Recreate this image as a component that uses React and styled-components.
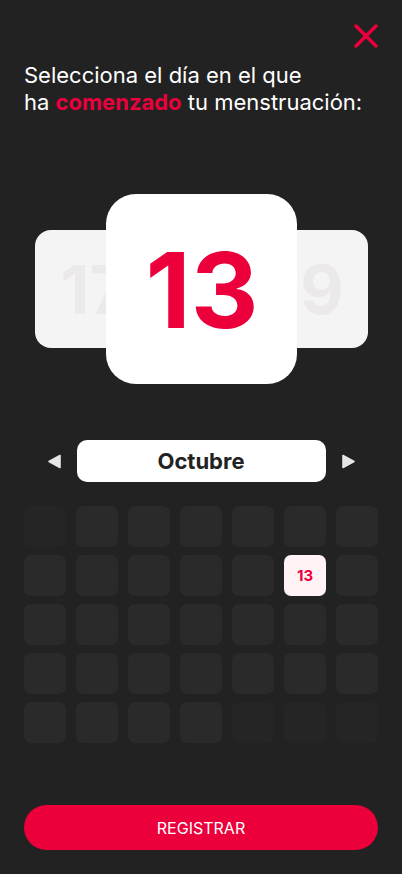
import React from "react";
import styled, { createGlobalStyle } from "styled-components";

const Global = createGlobalStyle`
  html, body { margin: 0; padding: 0; background: #222222; }
  body { font-family: Inter, "Noto Sans", sans-serif; }
  * { box-sizing: border-box; }
`;

const Page = styled.div`
  min-height: 874px;
  width: 402px;
  background: #222222;
  display: flex;
  flex-direction: column;
  padding: 24px 24px 24px;
`;

const TopBar = styled.div`
  display: flex;
  justify-content: flex-end;
`;

const CloseButton = styled.button`
  width: 24px;
  height: 24px;
  padding: 0;
  border: none;
  background: transparent;
  display: flex;
  cursor: pointer;
`;

const Title = styled.h1`
  margin: 14px 0 0;
  font-size: 22px;
  line-height: 27px;
  font-weight: 400;
  color: #ffffff;
`;

const Accent = styled.span`
  color: #eb003c;
  font-weight: 700;
`;

const Carousel = styled.div`
  margin-top: 78px;
  height: 190px;
  display: flex;
  align-items: center;
  justify-content: center;
`;

const SideCard = styled.div`
  width: 120px;
  height: 118px;
  border-radius: 16px;
  background: #f4f4f4;
  display: flex;
  align-items: center;
  justify-content: center;
  font-size: 67px;
  font-weight: 700;
  color: #ebe9ea;
  overflow: hidden;
  flex-shrink: 0;
`;

const MainCard = styled.div`
  position: relative;
  z-index: 1;
  width: 191px;
  height: 190px;
  margin: 0 -49px;
  border-radius: 30px;
  background: #ffffff;
  display: flex;
  align-items: center;
  justify-content: center;
  font-size: 105px;
  font-weight: 700;
  color: #eb003c;
  flex-shrink: 0;
  padding-left: 2px;
`;

const MonthRow = styled.div`
  margin-top: 56px;
  display: flex;
  align-items: center;
  justify-content: center;
  gap: 15px;
`;

const ArrowButton = styled.button`
  width: 15px;
  height: 15px;
  padding: 0;
  border: none;
  background: transparent;
  display: flex;
  cursor: pointer;
`;

const MonthPill = styled.div`
  width: 249px;
  height: 42px;
  border-radius: 10px;
  background: #ffffff;
  display: flex;
  align-items: center;
  justify-content: center;
  font-size: 22px;
  font-weight: 700;
  color: #222222;
`;

const DayGrid = styled.div`
  margin-top: 24px;
  display: grid;
  grid-template-columns: repeat(7, 1fr);
  column-gap: 10px;
  row-gap: 8px;
`;

const DayCell = styled.div`
  height: 41px;
  border-radius: 7px;
  background: ${(p) =>
    p.$selected ? "#fff3f6" : p.$muted ? "#252525" : "#2a2a2a"};
  display: flex;
  align-items: center;
  justify-content: center;
  font-size: 15px;
  font-weight: 700;
  color: #eb003c;
`;

const SubmitButton = styled.button`
  margin-top: auto;
  height: 45px;
  width: 100%;
  border: none;
  border-radius: 23px;
  background: #eb003c;
  color: #ffffff;
  font-family: Inter, "Noto Sans", sans-serif;
  font-size: 16px;
  font-weight: 400;
  cursor: pointer;
`;

const CloseIcon = () => (
  <svg width="24" height="24" viewBox="0 0 24 24">
    <path
      d="M2 2 L22 22 M22 2 L2 22"
      stroke="#eb003c"
      strokeWidth="3.4"
      strokeLinecap="round"
      fill="none"
    />
  </svg>
);

const Arrow = ({ dir }) => (
  <svg width="15" height="15" viewBox="0 0 15 15">
    {dir === "left" ? (
      <path d="M13 1.5 L13 13.5 L2 7.5 Z" fill="#e6e6e6" stroke="#e6e6e6" strokeWidth="1.6" strokeLinejoin="round" />
    ) : (
      <path d="M2 1.5 L2 13.5 L13 7.5 Z" fill="#e6e6e6" stroke="#e6e6e6" strokeWidth="1.6" strokeLinejoin="round" />
    )}
  </svg>
);

const cells = Array.from({ length: 35 }, (_, i) => ({
  i,
  muted: i === 0 || i >= 32,
  selected: i === 12,
}));

export default function App() {
  return (
    <>
      <Global />
      <Page>
        <TopBar>
          <CloseButton aria-label="Cerrar">
            <CloseIcon />
          </CloseButton>
        </TopBar>
        <Title>
          Selecciona el día en el que
          <br />
          ha <Accent>comenzado</Accent> tu menstruación:
        </Title>
        <Carousel>
          <SideCard>17</SideCard>
          <MainCard>13</MainCard>
          <SideCard>19</SideCard>
        </Carousel>
        <MonthRow>
          <ArrowButton aria-label="Anterior">
            <Arrow dir="left" />
          </ArrowButton>
          <MonthPill>Octubre</MonthPill>
          <ArrowButton aria-label="Siguiente">
            <Arrow dir="right" />
          </ArrowButton>
        </MonthRow>
        <DayGrid>
          {cells.map((c) => (
            <DayCell key={c.i} $muted={c.muted} $selected={c.selected}>
              {c.selected ? "13" : ""}
            </DayCell>
          ))}
        </DayGrid>
        <SubmitButton>REGISTRAR</SubmitButton>
      </Page>
    </>
  );
}
